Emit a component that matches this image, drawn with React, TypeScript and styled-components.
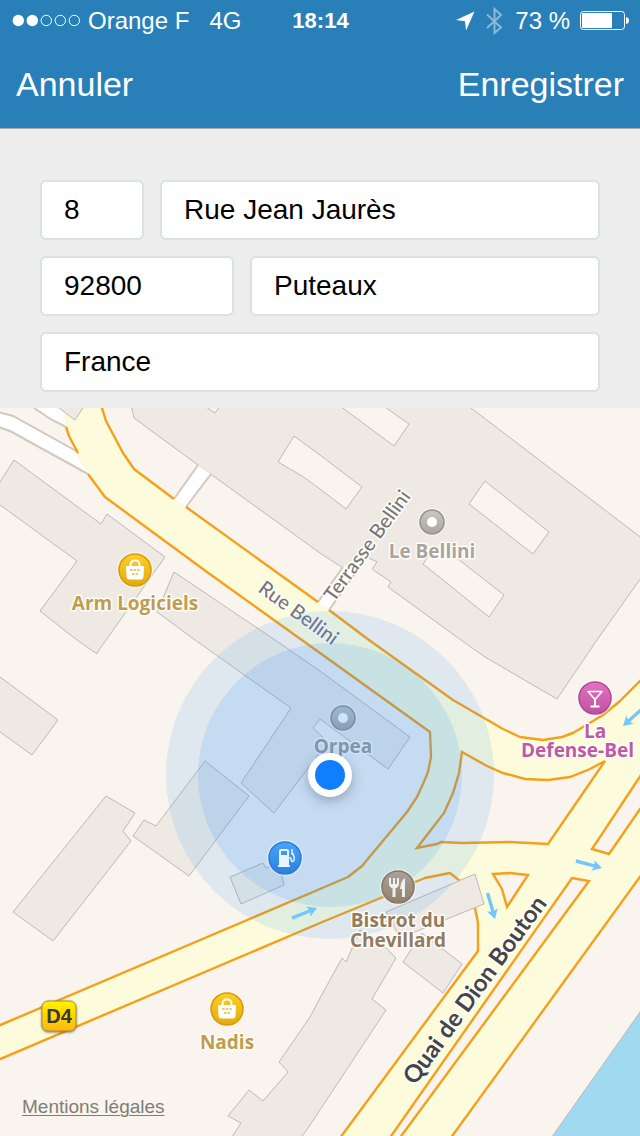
import React from 'react';
import styled, { createGlobalStyle } from 'styled-components';

const sans = '"Liberation Sans", Arial, sans-serif';
const mapFont = '"Open Sans", Lato, sans-serif';
const streetFont = 'Lato, "Open Sans", sans-serif';

const GlobalStyle = createGlobalStyle`
  * { box-sizing: border-box; }
  body { margin: 0; background: #f9f4ed; font-family: ${sans}; }
`;

const Page = styled.div`
  display: flex;
  flex-direction: column;
  min-height: 100vh;
`;

const Header = styled.header`
  background: #2980b9;
  color: #fff;
  box-shadow: 0 1px 0 #a9adb0;
  position: relative;
`;

const StatusBar = styled.div`
  display: grid;
  grid-template-columns: 1fr auto 1fr;
  align-items: center;
  height: 42px;
  padding: 0 11px 0 12px;
  font-size: 24px;
  line-height: 28px;
`;

const StatusGroup = styled.div<{ $end?: boolean; $gap: number }>`
  display: flex;
  align-items: center;
  justify-content: ${(p) => (p.$end ? 'flex-end' : 'flex-start')};
  gap: ${(p) => p.$gap}px;
  white-space: nowrap;
`;

const Carrier = styled.span`
  margin-right: 14px;
`;

const Clock = styled.time`
  font-size: 22px;
  font-weight: 700;
`;

const Glyph = styled.svg`
  display: block;
  flex: none;
`;

const NavBar = styled.nav`
  display: flex;
  align-items: center;
  justify-content: space-between;
  height: 86px;
  padding: 0 16px 2px;
`;

const NavButton = styled.button`
  border: 0;
  padding: 0;
  background: none;
  color: inherit;
  font: 34px/40px ${sans};
  cursor: pointer;
`;

const AddressForm = styled.form`
  display: flex;
  flex-direction: column;
  gap: 16px;
  padding: 52px 40px 16px;
  background: #ededed;
`;

const FieldRow = styled.div`
  display: flex;
  gap: 16px;
`;

const Field = styled.input<{ $width?: number }>`
  flex: ${(p) => (p.$width ? `0 0 ${p.$width}px` : '1 1 0')};
  min-width: 0;
  height: 60px;
  padding: 0 22px;
  border: 2px solid #dce0e4;
  border-radius: 6px;
  background: #fff;
  color: #000;
  font: 28px/32px ${sans};
  outline: none;
`;

const MapArea = styled.main`
  position: relative;
  flex: 1;
  overflow: hidden;
`;

const MapSvg = styled.svg`
  display: block;
  width: 100%;
  height: auto;
`;

const Legal = styled.a`
  position: absolute;
  left: 22px;
  bottom: 18px;
  color: #7f7d79;
  font-size: 19px;
  line-height: 22px;
  text-decoration: underline;
  text-decoration-thickness: 1px;
  text-underline-offset: 2px;
`;

const Building = styled.polygon`
  fill: #eeeae3;
  stroke: #bbbab8;
  stroke-width: 1;
`;

const Court = styled(Building)`
  fill: #f9f4ed;
`;

const RoadEdge = styled.polyline`
  fill: none;
  stroke: #f5a01a;
  stroke-width: 2.4;
  stroke-linejoin: round;
`;

const Island = styled.polygon`
  fill: #f9f4ed;
  stroke: #f5a01a;
  stroke-width: 2.4;
`;

const LaneFill = styled.polygon`
  fill: #fff;
`;

const LaneEdge = styled.polyline`
  fill: none;
  stroke: #d2c8bd;
  stroke-width: 2;
`;

const PlaceName = styled.text<{ $anchor?: string }>`
  font: 700 19px ${mapFont};
  text-anchor: ${(p) => p.$anchor ?? 'middle'};
  stroke: #fffdf9;
  stroke-width: 3;
  stroke-linejoin: round;
  paint-order: stroke;
`;

const StreetName = styled.text<{ $major?: boolean }>`
  font: ${(p) => (p.$major ? '700 24px' : '500 20px')} ${streetFont};
  fill: ${(p) => (p.$major ? '#44454b' : '#77777a')};
  stroke: #fffef6;
  stroke-width: 3;
  stroke-linejoin: round;
  paint-order: stroke;
`;

const RoadNumber = styled.text`
  font: 700 20px ${sans};
  fill: #3a3a2c;
  text-anchor: middle;
`;

const buildings = [
  '130,400 134,418 198,465 212,475 320,553 343,568 367,557 377,562 372,569 391,582 388,587 461,640 485,657 557,699 597,640 660,551 660,552 471,408 466,400',
  '14,460 101,524 107,514 165,557 99,650 97,654 77,640 40,611 77,561 -4,502 -4,488',
  '174,572 275,640 320,671 410,737 388,769 320,719 313,728 328,742 274,813 241,783 291,708 195,640 157,612',
  '205,761 249,796 189,876 133,836 144,820 156,826',
  '106,796 135,813 123,831 131,841 53,941 13,912',
  '-4,674 58,720 32,755 -4,729',
  '230,877 263,863 266,868 279,863 284,885 241,904',
  '360,930 346,962 342,958 320,998 310,1017 279,1062 288,1072 263,1101 249,1090 228,1116 241,1123 230,1140 299,1140 308,1128 320,1110 386,1010 372,999 396,958 386,948',
  '422,933 403,962 443,993 462,964',
];

const courts = [
  '294,436 278,462 302,476 320,489 346,509 362,487 320,455',
  '336,403 394,446 409,424 379,403',
  '485,481 469,504 533,554 549,532',
  '435,546 423,564 489,617 504,595 458,559',
  '200,403 215,413 222,403',
];

const roadShape =
  '61,400 100,400 102,408 106,421 123,453 134,469 174,499 186,507 318,602 329,610 369,640 453,700 503,729 520,737 543,740 562,737 573,733 603,715 620,701 640,681 640,877 452,1136 342,1136 478,951 478,923 475,908 460,881 450,873 425,878 415,882 383,897 0,1059 0,1025 320,889 348,877 362,866 407,812 417,797 423,784 428,772 431,757 430,732 320,653 207,572 158,536 105,497 88,474 78,453 69,436 66,427';

const roadEdges = [
  '100,400 102,408 106,421 123,453 134,469 174,499',
  '186,507 318,602',
  '329,610 369,640 453,700 503,729 520,737 543,740 562,737 573,733 603,715 620,701 642,679',
  '66,427 69,436 78,453',
  '88,474 105,497 158,536 207,572 320,653 430,732 431,757 428,772 423,784 417,797 407,812 362,866 348,877 320,889 -2,1026',
  '-2,1060 320,923 383,897 415,882 425,878 450,873 460,881',
  '475,908 478,923 478,951 340,1138',
  '642,874 450,1139',
];

const islands = [
  '462,752 487,766 503,773 525,779 548,780 570,777 590,769 605,761 548,844 510,842 462,843 441,842 437,844 417,848 444,813 453,793 459,773',
  '645,769 592,849 609,854 645,802',
  '493,874 510,873 528,875 507,907 502,889',
  '572,878 589,881 399,1139 389,1139',
];

type PinKind = 'shop' | 'bar' | 'fuel' | 'food' | 'plain';

const pinEdge: Record<PinKind, string> = {
  shop: '#d99c08',
  bar: '#b04c95',
  fuel: '#2b7fd8',
  food: '#85786a',
  plain: '#96938d',
};

function PinSymbol({ kind }: { kind: PinKind }) {
  if (kind === 'shop')
    return (
      <g>
        <path d="M-4.500-3V-5.500A4 4 0 0 1-.5-9.500H.5A4 4 0 0 1 4.500-5.500V-3" fill="none" stroke="#fff" strokeWidth="2" />
        <path d="M-9 -4H9L8.500 6.500a3 3 0 0 1-3 3H-5.500a3 3 0 0 1-3-3Z" fill="#fff" />
        <path d="M-5 0H5M-3 4H3" stroke="#e3b93f" strokeWidth="1.500" strokeDasharray="2.600 1" />
      </g>
    );
  if (kind === 'bar')
    return (
      <g>
        <path d="M-7-6.500H7L0 1.500Z" fill="none" stroke="#fff" strokeWidth="1.600" strokeLinejoin="round" />
        <path d="M0 1V8.500M-4.500 8.500H4.500" fill="none" stroke="#fff" strokeWidth="2" />
      </g>
    );
  if (kind === 'fuel')
    return (
      <g>
        <path
          fill="#e9f4ff"
          fillRule="evenodd"
          d="M-6-7a2 2 0 0 1 2-2H2a2 2 0 0 1 2 2V7H5V9H-7V7H-6ZM-4-7V-3H2V-7Z"
        />
        <path d="M4 0Q6.500-1 6 2Q7 5 9 2Q10-2 7-4V-9M7-5L9-3" fill="none" stroke="#e9f4ff" strokeWidth="1.500" />
      </g>
    );
  if (kind === 'food')
    return (
      <g>
        <path
          d="M-8-9V-3Q-8 0-4 0Q0 0 0-3V-9M-4-9V0"
          fill="none"
          stroke="#eef0f3"
          strokeWidth="2"
        />
        <path d="M-7-3H-1V1H-7ZM-5.500 0H-2.500V10H-5.500ZM7-9V10H4V2H2Q3-7 7-9Z" fill="#eef0f3" />
      </g>
    );
  return <circle r="5" fill="#fff" />;
}

function Pin({ x, y, kind }: { x: number; y: number; kind: PinKind }) {
  const r = kind === 'plain' ? 12 : 16;
  return (
    <g transform={`translate(${x} ${y})`}>
      <circle r={r + 2} fill="#fff" opacity="0.5" />
      <circle r={r} fill={`url(#pin-${kind})`} stroke={pinEdge[kind]} strokeWidth="1.600" />
      <PinSymbol kind={kind} />
    </g>
  );
}

function LaneArrow({ x, y, angle }: { x: number; y: number; angle: number }) {
  return (
    <g transform={`translate(${x} ${y}) rotate(${angle})`} fill="#74c6fb">
      <path d="M-27-1.700H-8L-9.500-5.500L0 0L-9.500 5.500L-8 1.700H-27Z" />
    </g>
  );
}

const gradients: [string, string, string][] = [
  ['pin-shop', '#ffce27', '#e2ab10'],
  ['pin-bar', '#e472c4', '#bd549f'],
  ['pin-fuel', '#48a3ff', '#2a82dd'],
  ['pin-food', '#aba298', '#948069'],
  ['pin-plain', '#c9c7c2', '#a9a69f'],
  ['road-sign', '#fff200', '#ffb70c'],
];

function CityMap() {
  return (
    <MapSvg viewBox="0 408 640 728" role="img" aria-label="Puteaux">
      <defs>
        {gradients.map(([id, top, bottom]) => (
          <linearGradient key={id} id={id} x1="0" y1="0" x2="0" y2="1">
            <stop offset="0" stopColor={top} />
            <stop offset="1" stopColor={bottom} />
          </linearGradient>
        ))}
        <filter id="soft" x="-50%" y="-50%" width="200%" height="200%">
          <feDropShadow dx="0" dy="4" stdDeviation="6" floodColor="#3c5066" floodOpacity="0.4" />
        </filter>
        <filter id="sign-shadow" x="-50%" y="-50%" width="200%" height="200%">
          <feDropShadow dx="0" dy="1" stdDeviation="1" floodColor="#444" floodOpacity="0.7" />
        </filter>
      </defs>
      <rect y="408" width="640" height="728" fill="#f9f4ed" />
      <polygon points="645,1005 645,1141 549,1141" fill="#a1d9f1" stroke="#bbbab8" />

      <LaneFill points="0,413 13,416 73,449 88,474 10,431 0,427" />
      <LaneFill points="34,408 52,420 66,427 64,408" />
      <LaneEdge points="-2,412 13,416 78,452" />
      <LaneEdge points="-2,427 10,431 88,474" />
      <LaneEdge points="34,408 52,420 66,427" />

      {buildings.map((points) => (
        <Building key={points} points={points} />
      ))}
      {courts.map((points) => (
        <Court key={points} points={points} />
      ))}
      <LaneFill points="198,465 211,474 186,508 174,500" />
      <LaneEdge points="198,465 174,499" />
      <LaneEdge points="211,474 186,507" />
      <LaneFill points="343,567 366,558 329,611 318,603" />
      <LaneEdge points="343,567 318,602" />
      <LaneEdge points="366,558 329,610" />

      <polygon points={roadShape} fill="#fcfbdb" />
      {roadEdges.map((points) => (
        <RoadEdge key={points} points={points} />
      ))}
      {islands.map((points) => (
        <Island key={points} points={points} />
      ))}
      <Building points="59,408 75,420 83,408 83,403 59,403" />
      <Building points="475,874 484,904 400,938 386,912" />

      <LaneArrow x={602} y={868} angle={15} />
      <LaneArrow x={623} y={726} angle={138} />
      <LaneArrow x={495} y={919} angle={74} />

      <StreetName transform="translate(257 591) rotate(36)">Rue Bellini</StreetName>
      <StreetName transform="translate(334 603) rotate(-54)">Terrasse Bellini</StreetName>
      <StreetName $major transform="translate(415 1086) rotate(-54)">Quai de Dion Bouton</StreetName>

      <Pin x={432} y={522} kind="plain" />
      <PlaceName x="432" y="558" fill="#a8a49e">Le Bellini</PlaceName>
      <Pin x={343} y={718} kind="plain" />
      <PlaceName x="343" y="753" fill="#a09b92">Orpea</PlaceName>

      <circle cx="330" cy="775" r="164" fill="rgb(20,136,255)" fillOpacity="0.11" />
      <circle cx="330" cy="775" r="132" fill="rgb(20,130,255)" fillOpacity="0.12" />

      <LaneArrow x={317} y={908} angle={-22} />
      <Pin x={398} y={887} kind="food" />
      <PlaceName fill="#927b5f">
        <tspan x="398" y="927">Bistrot du</tspan>
        <tspan x="398" y="947">Chevillard</tspan>
      </PlaceName>
      <Pin x={135} y={570} kind="shop" />
      <PlaceName x="135" y="610" fill="#c09d4e">Arm Logiciels</PlaceName>
      <Pin x={227} y={1009} kind="shop" />
      <PlaceName x="227" y="1049" fill="#c09d4e">Nadis</PlaceName>
      <Pin x={595} y={698} kind="bar" />
      <PlaceName fill="#bd5ba2" $anchor="start">
        <tspan x="584" y="738">La</tspan>
        <tspan x="521" y="757">Defense-Bel</tspan>
      </PlaceName>
      <Pin x={285} y={858} kind="fuel" />

      <circle cx="330" cy="775" r="22" fill="#fff" filter="url(#soft)" />
      <circle cx="330" cy="775" r="15" fill="#0f7fff" />

      <rect x="42" y="1001" width="34" height="30" rx="6" fill="url(#road-sign)" stroke="#a98d2a" filter="url(#sign-shadow)" />
      <RoadNumber x="59" y="1023">D4</RoadNumber>
    </MapSvg>
  );
}

function SignalDots() {
  return (
    <Glyph width="70" height="14" viewBox="0 0 70 14" aria-hidden="true">
      {[0, 1, 2, 3, 4].map((i) => (
        <circle key={i} cx={6.3 + i * 14} cy="6.500" r={i < 2 ? 5.7 : 5.2} fill={i < 2 ? '#fff' : 'none'} stroke={i < 2 ? 'none' : '#fff'} />
      ))}
    </Glyph>
  );
}

export default function App() {
  return (
    <Page>
      <GlobalStyle />
      <Header>
        <StatusBar>
          <StatusGroup $gap={6}>
            <SignalDots />
            <Carrier>Orange F</Carrier>
            <span>4G</span>
          </StatusGroup>
          <Clock>18:14</Clock>
          <StatusGroup $end $gap={10}>
            <Glyph width="19" height="20" viewBox="0 0 19 20" aria-hidden="true">
              <path d="M18.500 .5L0 9L9 10.300L10 19.500Z" fill="#fff" />
            </Glyph>
            <Glyph width="20" height="28" viewBox="0 0 20 28" aria-hidden="true">
              <path d="M2 7.500L16 20.500L9.500 26V2L16 8L2 21" fill="none" stroke="#fff" strokeWidth="2" opacity="0.45" />
            </Glyph>
            <span>73 %</span>
            <Glyph width="49" height="20" viewBox="0 0 49 20" aria-hidden="true">
              <rect x=".5" y=".5" width="44" height="18" rx="3" fill="none" stroke="#fff" />
              <rect x="2" y="2" width="30" height="15" rx="1" fill="#fff" />
              <path d="M46 6Q49 6.500 49 9.500Q49 12.500 46 13Z" fill="#fff" />
            </Glyph>
          </StatusGroup>
        </StatusBar>
        <NavBar>
          <NavButton type="button">Annuler</NavButton>
          <NavButton type="button">Enregistrer</NavButton>
        </NavBar>
      </Header>
      <AddressForm onSubmit={(e) => e.preventDefault()}>
        <FieldRow>
          <Field $width={104} aria-label="Numéro" defaultValue="8" />
          <Field aria-label="Rue" defaultValue="Rue Jean Jaurès" />
        </FieldRow>
        <FieldRow>
          <Field $width={194} aria-label="Code postal" defaultValue="92800" />
          <Field aria-label="Ville" defaultValue="Puteaux" />
        </FieldRow>
        <FieldRow>
          <Field aria-label="Pays" defaultValue="France" />
        </FieldRow>
      </AddressForm>
      <MapArea>
        <CityMap />
        <Legal href="#mentions">Mentions légales</Legal>
      </MapArea>
    </Page>
  );
}
